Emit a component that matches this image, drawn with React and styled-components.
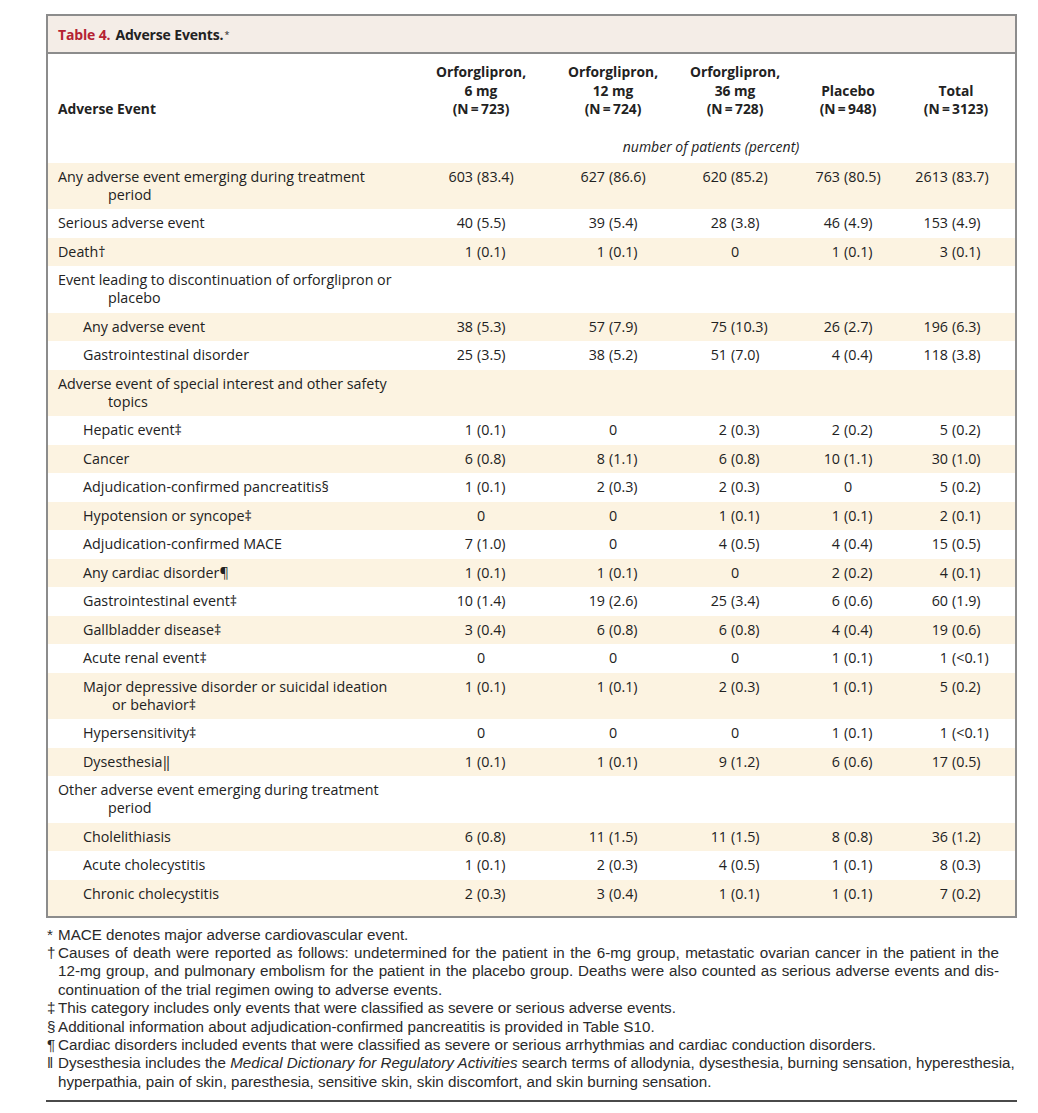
import React from "react";
import styled, { createGlobalStyle } from "styled-components";

const GlobalStyle = createGlobalStyle`
  html, body { margin: 0; padding: 0; background: #ffffff; }
  body { font-family: "Open Sans", "Noto Sans", sans-serif; color: #222222; }
`;

const Page = styled.div`
  padding: 14px 21px 0 46px;
  width: 971px;
`;

const TableBox = styled.section`
  border: 2px solid #8c8c8c;
  background: #fff;
`;

const TitleBar = styled.header`
  background: #f4ede7;
  border-bottom: 2px solid #8c8c8c;
  height: 36px;
  display: flex;
  align-items: center;
  padding-left: 10px;
  font-size: 14px;
  font-weight: 700;
  letter-spacing: -0.15px;
`;

const TableNo = styled.span`
  color: #b52233;
  margin-right: 5px;
`;

const Sup = styled.sup`
  font-size: 9px;
  font-weight: 400;
  vertical-align: 5px;
  margin-left: 1px;
`;

const columns = "367px 132px 132px 112px 114px 102px";

const HeadRow = styled.div`
  display: grid;
  grid-template-columns: ${columns};
  padding: 9px 8px 0 0;
  align-items: end;
  font-weight: 700;
  font-size: 13.8px;
  line-height: 18.5px;
`;

const HeadLabel = styled.div`
  padding-left: 10px;
`;

const HeadCol = styled.div`
  text-align: center;
`;

const UnitRow = styled.div`
  display: grid;
  grid-template-columns: ${columns};
  padding: 19px 8px 7px 0;
  font-style: italic;
  font-size: 14px;
  line-height: 18px;
`;

const UnitText = styled.div`
  grid-column: 2 / 7;
  text-align: center;
`;

const Row = styled.div`
  display: grid;
  grid-template-columns: ${columns};
  padding: 5px 8px 5.5px 0;
  align-items: start;
  font-size: 14.3px;
  line-height: 18px;
  background: ${(p) => (p.$shaded ? "#fcf3e1" : "#ffffff")};
  &:last-child { padding-bottom: 13px; }
`;

const Label = styled.div`
  padding-left: ${(p) => (p.$level ? 35 : 10)}px;
  white-space: nowrap;
`;

const Cont = styled.span`
  display: block;
  padding-left: ${(p) => (p.$level ? 29 : 50)}px;
`;

const NumCell = styled.div`
  display: grid;
  grid-template-columns: 1fr 1fr;
  column-gap: 4px;
  padding-right: 12px;
  white-space: nowrap;
`;

const Int = styled.span`
  text-align: right;
`;

const Pct = styled.span`
  text-align: left;
`;

const ZeroCell = styled.div`
  text-align: center;
`;

const Notes = styled.div`
  padding: 8px 0 9px 0;
  border-bottom: 2px solid #4a4a4a;
  font-family: "Liberation Sans Narrow", "Liberation Sans", sans-serif;
  font-size: 15.2px;
  line-height: 18.4px;
  color: #2a2a2a;
`;

const Note = styled.div`
  display: grid;
  grid-template-columns: 12px 1fr;
`;

const Sym = styled.span`
  padding-left: 1px;
`;

const Line = styled.span`
  display: block;
  white-space: nowrap;
  text-align: ${(p) => (p.$full ? "justify" : "left")};
  text-align-last: ${(p) => (p.$full ? "justify" : "left")};
  padding-right: ${(p) => (p.$full ? "18px" : "0")};
`;

const header = [
  ["Orforglipron,", "6 mg", "(N\u2009=\u2009723)"],
  ["Orforglipron,", "12 mg", "(N\u2009=\u2009724)"],
  ["Orforglipron,", "36 mg", "(N\u2009=\u2009728)"],
  ["Placebo", "(N\u2009=\u2009948)"],
  ["Total", "(N\u2009=\u20093123)"],
];

const rows = [
  { label: ["Any adverse event emerging during treatment", "period"], vals: ["603 (83.4)", "627 (86.6)", "620 (85.2)", "763 (80.5)", "2613 (83.7)"] },
  { label: ["Serious adverse event"], vals: ["40 (5.5)", "39 (5.4)", "28 (3.8)", "46 (4.9)", "153 (4.9)"] },
  { label: ["Death\u2020"], vals: ["1 (0.1)", "1 (0.1)", "0", "1 (0.1)", "3 (0.1)"] },
  { label: ["Event leading to discontinuation of orforglipron or", "placebo"], vals: [] },
  { level: 1, label: ["Any adverse event"], vals: ["38 (5.3)", "57 (7.9)", "75 (10.3)", "26 (2.7)", "196 (6.3)"] },
  { level: 1, label: ["Gastrointestinal disorder"], vals: ["25 (3.5)", "38 (5.2)", "51 (7.0)", "4 (0.4)", "118 (3.8)"] },
  { label: ["Adverse event of special interest and other safety", "topics"], vals: [] },
  { level: 1, label: ["Hepatic event\u2021"], vals: ["1 (0.1)", "0", "2 (0.3)", "2 (0.2)", "5 (0.2)"] },
  { level: 1, label: ["Cancer"], vals: ["6 (0.8)", "8 (1.1)", "6 (0.8)", "10 (1.1)", "30 (1.0)"] },
  { level: 1, label: ["Adjudication-confirmed pancreatitis\u00a7"], vals: ["1 (0.1)", "2 (0.3)", "2 (0.3)", "0", "5 (0.2)"] },
  { level: 1, label: ["Hypotension or syncope\u2021"], vals: ["0", "0", "1 (0.1)", "1 (0.1)", "2 (0.1)"] },
  { level: 1, label: ["Adjudication-confirmed MACE"], vals: ["7 (1.0)", "0", "4 (0.5)", "4 (0.4)", "15 (0.5)"] },
  { level: 1, label: ["Any cardiac disorder\u00b6"], vals: ["1 (0.1)", "1 (0.1)", "0", "2 (0.2)", "4 (0.1)"] },
  { level: 1, label: ["Gastrointestinal event\u2021"], vals: ["10 (1.4)", "19 (2.6)", "25 (3.4)", "6 (0.6)", "60 (1.9)"] },
  { level: 1, label: ["Gallbladder disease\u2021"], vals: ["3 (0.4)", "6 (0.8)", "6 (0.8)", "4 (0.4)", "19 (0.6)"] },
  { level: 1, label: ["Acute renal event\u2021"], vals: ["0", "0", "0", "1 (0.1)", "1 (<0.1)"] },
  { level: 1, label: ["Major depressive disorder or suicidal ideation", "or behavior\u2021"], vals: ["1 (0.1)", "1 (0.1)", "2 (0.3)", "1 (0.1)", "5 (0.2)"] },
  { level: 1, label: ["Hypersensitivity\u2021"], vals: ["0", "0", "0", "1 (0.1)", "1 (<0.1)"] },
  { level: 1, label: ["Dysesthesia\u2016"], vals: ["1 (0.1)", "1 (0.1)", "9 (1.2)", "6 (0.6)", "17 (0.5)"] },
  { label: ["Other adverse event emerging during treatment", "period"], vals: [] },
  { level: 1, label: ["Cholelithiasis"], vals: ["6 (0.8)", "11 (1.5)", "11 (1.5)", "8 (0.8)", "36 (1.2)"] },
  { level: 1, label: ["Acute cholecystitis"], vals: ["1 (0.1)", "2 (0.3)", "4 (0.5)", "1 (0.1)", "8 (0.3)"] },
  { level: 1, label: ["Chronic cholecystitis"], vals: ["2 (0.3)", "3 (0.4)", "1 (0.1)", "1 (0.1)", "7 (0.2)"] },
];

function Value({ v }) {
  const i = v.indexOf(" ");
  if (i < 0) return <ZeroCell>{v}</ZeroCell>;
  return (
    <NumCell>
      <Int>{v.slice(0, i)}</Int>
      <Pct>{v.slice(i + 1)}</Pct>
    </NumCell>
  );
}

const notes = [
  { sym: "*", lines: [{ t: "MACE denotes major adverse cardiovascular event." }] },
  {
    sym: "\u2020",
    lines: [
      { t: "Causes of death were reported as follows: undetermined for the patient in the 6-mg group, metastatic ovarian cancer in the patient in the", full: true },
      { t: "12-mg group, and pulmonary embolism for the patient in the placebo group. Deaths were also counted as serious adverse events and dis-", full: true },
      { t: "continuation of the trial regimen owing to adverse events." },
    ],
  },
  { sym: "\u2021", lines: [{ t: "This category includes only events that were classified as severe or serious adverse events." }] },
  { sym: "\u00a7", lines: [{ t: "Additional information about adjudication-confirmed pancreatitis is provided in Table S10." }] },
  { sym: "\u00b6", lines: [{ t: "Cardiac disorders included events that were classified as severe or serious arrhythmias and cardiac conduction disorders." }] },
  {
    sym: "\u2016",
    lines: [
      {
        t: (
          <>
            Dysesthesia includes the <i>Medical Dictionary for Regulatory Activities</i> search terms of allodynia, dysesthesia, burning sensation, hyperesthesia,
          </>
        ),
        full: true,
      },
      { t: "hyperpathia, pain of skin, paresthesia, sensitive skin, skin discomfort, and skin burning sensation." },
    ],
  },
];

export default function App() {
  return (
    <Page>
      <GlobalStyle />
      <TableBox>
        <TitleBar>
          <TableNo>Table 4.</TableNo>
          Adverse Events.<Sup>*</Sup>
        </TitleBar>
        <HeadRow>
          <HeadLabel>Adverse Event</HeadLabel>
          {header.map((h, i) => (
            <HeadCol key={i}>
              {h.map((l, j) => (
                <div key={j}>{l}</div>
              ))}
            </HeadCol>
          ))}
        </HeadRow>
        <UnitRow>
          <UnitText>number of patients (percent)</UnitText>
        </UnitRow>
        {rows.map((r, i) => (
          <Row key={i} $shaded={i % 2 === 0}>
            <Label $level={r.level}>
              {r.label[0]}
              {r.label[1] && <Cont $level={r.level}>{r.label[1]}</Cont>}
            </Label>
            {r.vals.map((v, j) => (
              <Value key={j} v={v} />
            ))}
          </Row>
        ))}
      </TableBox>
      <Notes>
        {notes.map((n, i) => (
          <Note key={i}>
            <Sym>{n.sym}</Sym>
            <div>
              {n.lines.map((l, j) => (
                <Line key={j} $full={l.full}>
                  {l.t}
                </Line>
              ))}
            </div>
          </Note>
        ))}
      </Notes>
    </Page>
  );
}
